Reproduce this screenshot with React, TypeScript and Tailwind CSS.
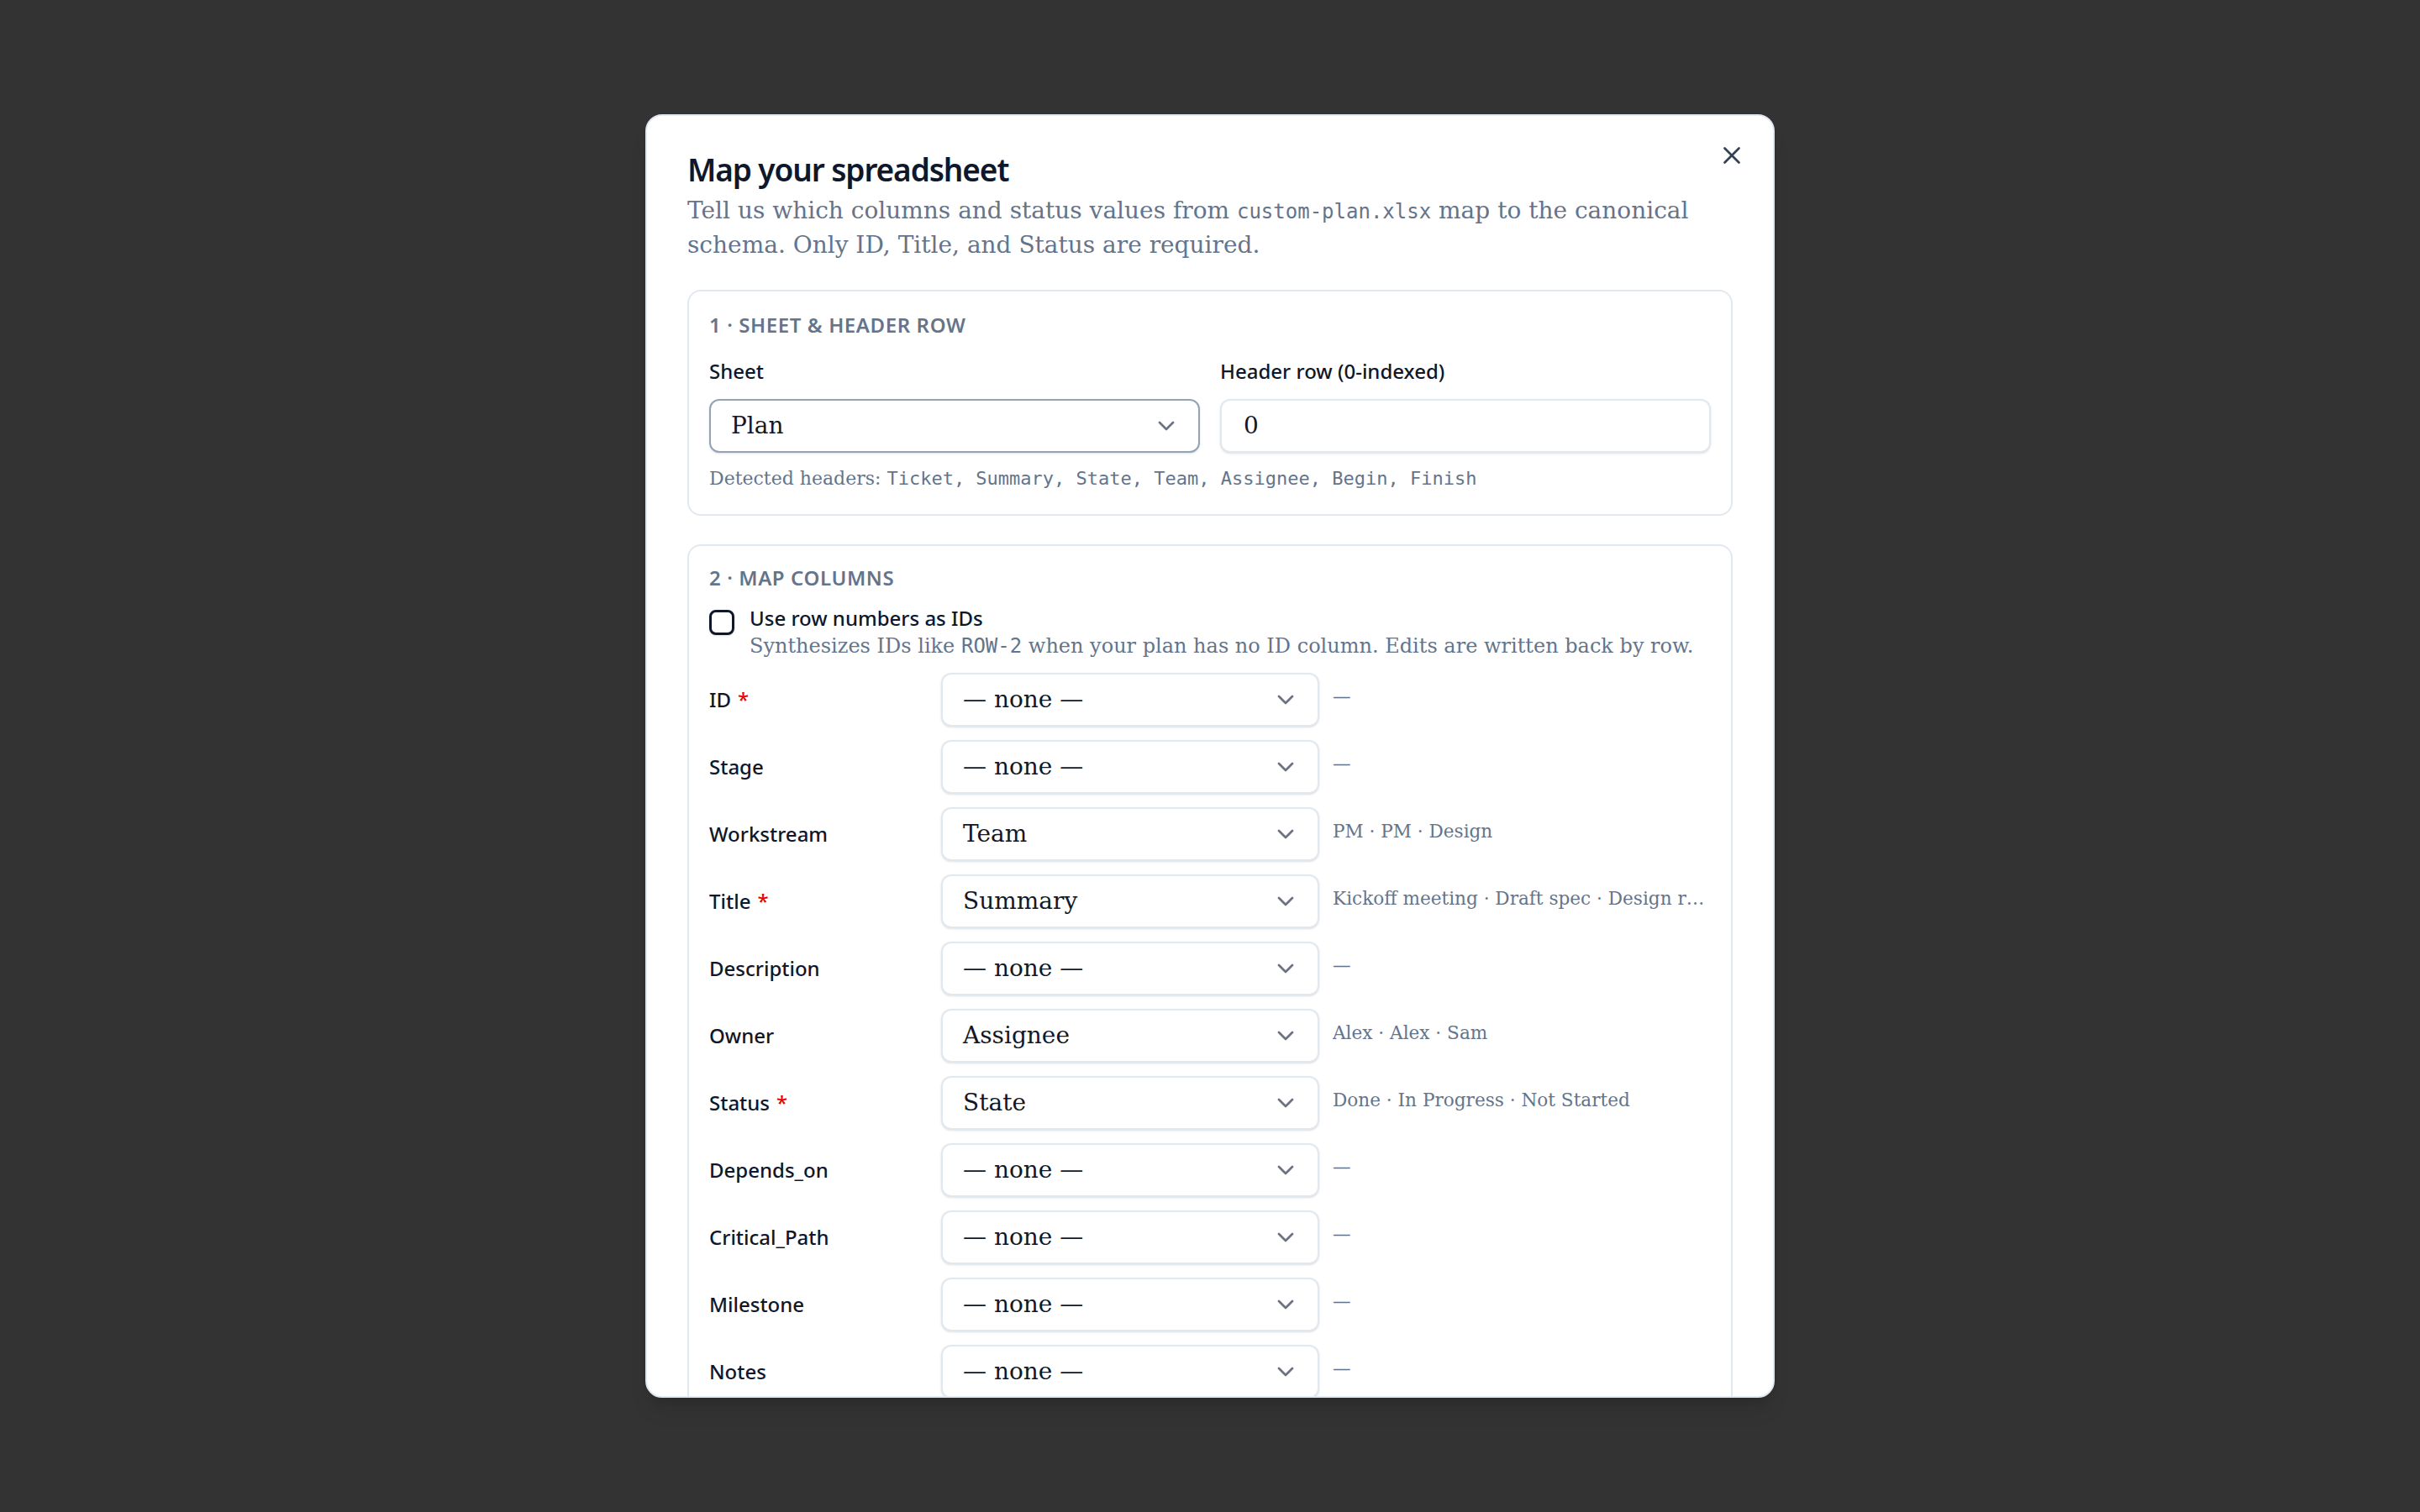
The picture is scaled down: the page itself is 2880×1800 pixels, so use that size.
import { ChevronDown, X } from "lucide-react";

const sans = "font-['Noto_Sans',sans-serif]";
const serif = "font-['DejaVu_Serif',serif]";
const mono = "font-['DejaVu_Sans_Mono',monospace]";

type Field = {
  label: string;
  required?: boolean;
  value: string;
  preview: string;
};

const fields: Field[] = [
  { label: "ID", required: true, value: "— none —", preview: "—" },
  { label: "Stage", value: "— none —", preview: "—" },
  { label: "Workstream", value: "Team", preview: "PM · PM · Design" },
  {
    label: "Title",
    required: true,
    value: "Summary",
    preview: "Kickoff meeting · Draft spec · Design r…",
  },
  { label: "Description", value: "— none —", preview: "—" },
  { label: "Owner", value: "Assignee", preview: "Alex · Alex · Sam" },
  {
    label: "Status",
    required: true,
    value: "State",
    preview: "Done · In Progress · Not Started",
  },
  { label: "Depends_on", value: "— none —", preview: "—" },
  { label: "Critical_Path", value: "— none —", preview: "—" },
  { label: "Milestone", value: "— none —", preview: "—" },
  { label: "Notes", value: "— none —", preview: "—" },
  { label: "Start", value: "Begin", preview: "2024-01-08 · 2024-01-10" },
  { label: "End", value: "Finish", preview: "2024-01-09 · 2024-01-15" },
];

function FakeSelect({ value, focused }: { value: string; focused?: boolean }) {
  return (
    <div
      className={`flex h-[64px] items-center justify-between rounded-[12px] border-2 bg-white pl-[24px] pr-[22px] shadow-sm ${
        focused ? "border-[#94a3b8]" : "border-[#e2e8f0]"
      }`}
    >
      <span className={`${serif} text-[28px] text-[#111827]`}>{value}</span>
      <ChevronDown className="h-[32px] w-[32px] text-[#6b7280]" strokeWidth={2} />
    </div>
  );
}

function SectionTitle({ children }: { children: React.ReactNode }) {
  return (
    <div
      className={`${sans} text-[24px] font-semibold uppercase leading-[32px] tracking-wide text-[#64748b]`}
    >
      {children}
    </div>
  );
}

export default function App() {
  return (
    <div className="flex h-[1800px] items-center justify-center bg-[#333333]">
      <div className="relative h-[1528px] w-[1344px] overflow-hidden rounded-[20px] border-2 border-[#e2e8f0] bg-white px-[48px] pt-[40px] shadow-xl">
        <button className="absolute right-[32px] top-[30px] p-[0px] text-[#334155]">
          <X className="h-[34px] w-[34px]" strokeWidth={1.9} />
        </button>

        <h2
          className={`${sans} text-[37px] font-semibold leading-[48px] tracking-[-0.03em] text-[#0f172a]`}
        >
          Map your spreadsheet
        </h2>
        <p className={`${serif} mt-[5px] text-[28px] leading-[39px] text-[#64748b]`}>
          Tell us which columns and status values from{" "}
          <code className={`${mono} text-[24px]`}>custom-plan.xlsx</code> map to the
          canonical schema. Only ID, Title, and Status are required.
        </p>

        <section className="mt-[34px] rounded-[16px] border-2 border-[#e2e8f0] px-[24px] pb-[26px] pt-[24px]">
          <SectionTitle>1 · Sheet &amp; header row</SectionTitle>
          <div className="mt-[23px] grid grid-cols-2 gap-x-[24px]">
            <div>
              <div className={`${sans} text-[24px] font-medium leading-[32px] text-[#0f172a]`}>
                Sheet
              </div>
              <div className="mt-[17px]">
                <FakeSelect value="Plan" focused />
              </div>
            </div>
            <div>
              <div className={`${sans} text-[24px] font-medium leading-[32px] text-[#0f172a]`}>
                Header row (0-indexed)
              </div>
              <div className="mt-[17px] flex h-[64px] items-center rounded-[12px] border-2 border-[#e2e8f0] bg-white px-[26px] shadow-sm">
                <span className={`${serif} text-[28px] text-[#111827]`}>0</span>
              </div>
            </div>
          </div>
          <div className={`${serif} mt-[15px] text-[22px] leading-[32px] text-[#64748b]`}>
            Detected headers:{" "}
            <span className={mono}>Ticket, Summary, State, Team, Assignee, Begin, Finish</span>
          </div>
        </section>

        <section className="mt-[34px] rounded-[16px] border-2 border-[#e2e8f0] p-[24px] pt-[22px]">
          <SectionTitle>2 · Map columns</SectionTitle>

          <label className="mt-[16px] flex items-start gap-[18px]">
            <span className="mt-[6px] h-[30px] w-[30px] shrink-0 rounded-[8px] border-[3px] border-[#0f172a] bg-white shadow-sm" />
            <span>
              <span
                className={`${sans} block text-[24px] font-medium leading-[32px] text-[#0f172a]`}
              >
                Use row numbers as IDs
              </span>
              <span className={`${serif} block text-[24px] leading-[34px] text-[#64748b]`}>
                Synthesizes IDs like <code className={`${mono} text-[24px]`}>ROW-2</code> when
                your plan has no ID column. Edits are written back by row.
              </span>
            </span>
          </label>

          <div className="mt-[15px] grid grid-cols-[260px_1fr_1fr] items-center gap-x-[16px] gap-y-[16px]">
            {fields.map((f) => (
              <div key={f.label} className="contents">
                <div className={`${sans} text-[24px] font-medium leading-[32px] text-[#0f172a]`}>
                  {f.label}
                  {f.required && <span className="ml-[8px] text-[#ef0000]">*</span>}
                </div>
                <FakeSelect value={f.value} />
                <div
                  className={`${serif} -mt-[6px] truncate whitespace-nowrap text-[21.6px] leading-[32px] text-[#64748b]`}
                >
                  {f.preview}
                </div>
              </div>
            ))}
          </div>
        </section>
      </div>
    </div>
  );
}
